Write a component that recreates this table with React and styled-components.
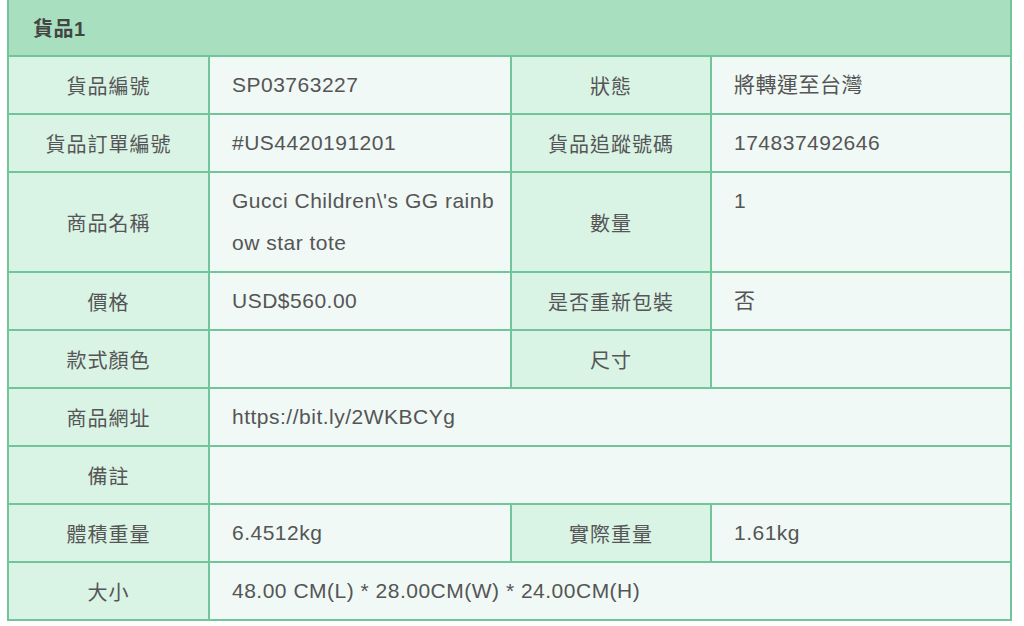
import React from "react";
import styled, { createGlobalStyle } from "styled-components";

const GlobalStyle = createGlobalStyle`
  html, body {
    margin: 0;
    padding: 0;
    background: #ffffff;
  }
  body {
    font-family: "Liberation Sans", "Noto Sans CJK TC", sans-serif;
  }
`;

const Page = styled.div`
  padding: 0 12px 0 7px;
`;

const Sheet = styled.div`
  display: grid;
  grid-template-columns: 199px 300px 198px 1fr;
  gap: 2px;
  padding: 0 2px 2px 2px;
  background: #72c59a;
  color: #555555;
  font-size: 21px;
  letter-spacing: 0.5px;
`;

const Header = styled.div`
  grid-column: 1 / -1;
  height: 55px;
  display: flex;
  align-items: center;
  padding-left: 24px;
  background: #a7dfbf;
  color: #444444;
  font-size: 20px;
  font-weight: bold;
`;

const Label = styled.div`
  display: flex;
  align-items: center;
  justify-content: center;
  min-height: 56px;
  background: #d9f3e5;
  font-size: 20px;
  letter-spacing: 1px;
`;

const Value = styled.div`
  grid-column: ${(p) => (p.$wide ? "2 / -1" : "auto")};
  padding: 7px 8px 7px 22px;
  line-height: 42px;
  min-height: 42px;
  background: #f0f9f5;
  word-break: break-all;
`;

const rows = [
  [["貨品編號", "SP03763227"], ["狀態", "將轉運至台灣"]],
  [["貨品訂單編號", "#US4420191201"], ["貨品追蹤號碼", "174837492646"]],
  [["商品名稱", "Gucci Children\\'s GG rainbow star tote"], ["數量", "1"]],
  [["價格", "USD$560.00"], ["是否重新包裝", "否"]],
  [["款式顏色", ""], ["尺寸", ""]],
  [["商品網址", "https://bit.ly/2WKBCYg"]],
  [["備註", ""]],
  [["體積重量", "6.4512kg"], ["實際重量", "1.61kg"]],
  [["大小", "48.00 CM(L) * 28.00CM(W) * 24.00CM(H)"]],
];

export default function App() {
  return (
    <Page>
      <GlobalStyle />
      <Sheet>
        <Header>貨品1</Header>
        {rows.map((row) =>
          row.map(([label, value]) => (
            <React.Fragment key={label}>
              <Label>{label}</Label>
              <Value $wide={row.length === 1}>{value}</Value>
            </React.Fragment>
          ))
        )}
      </Sheet>
    </Page>
  );
}
